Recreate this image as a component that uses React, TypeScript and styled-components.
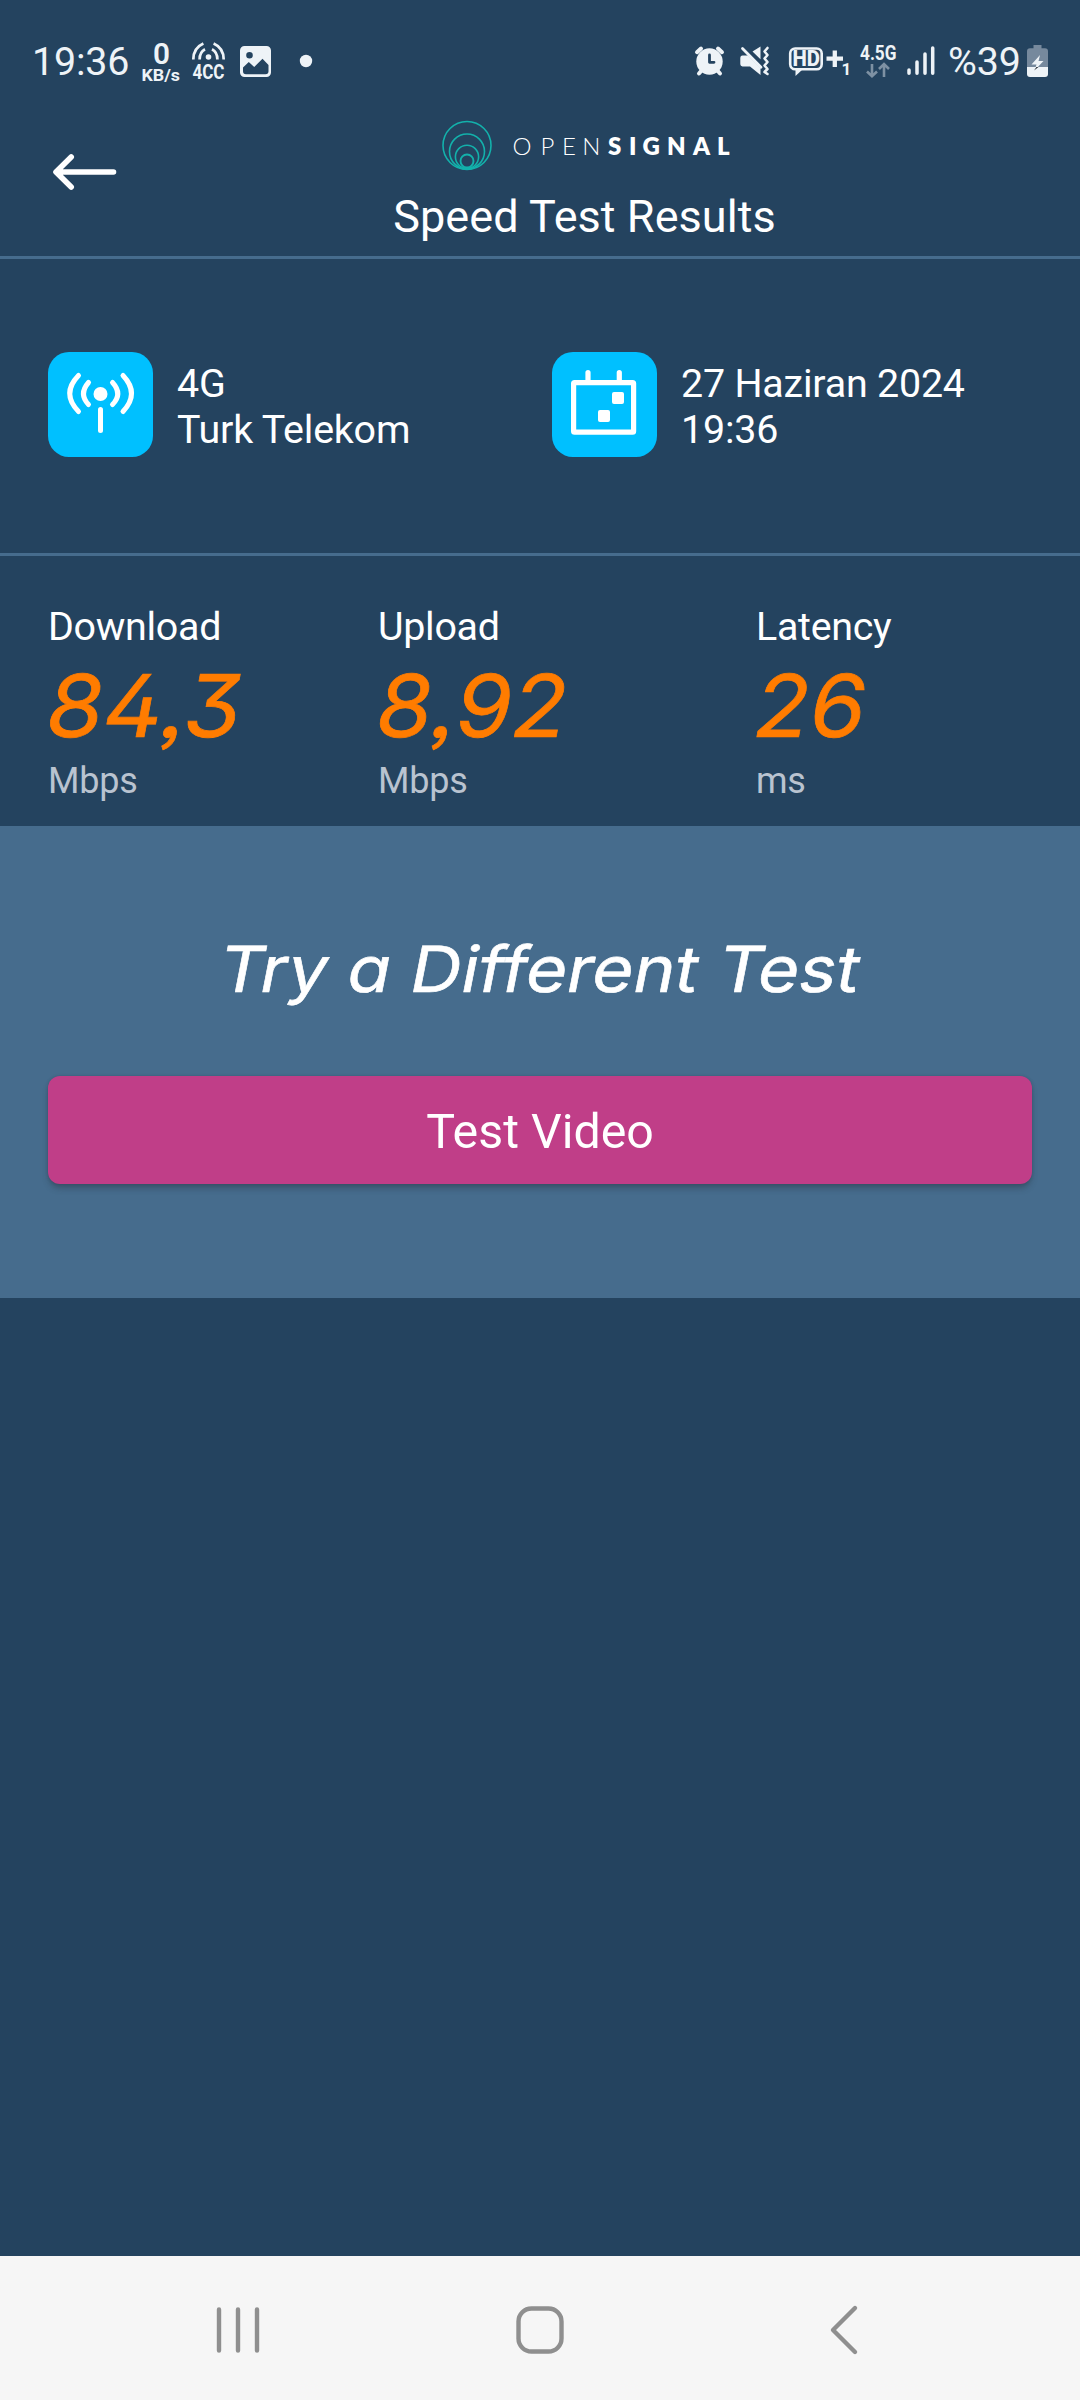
import React from "react";
import styled, { createGlobalStyle } from "styled-components";

const ink = "#eef3f7";
const navy = "#24435f";
const steel = "#466c8d";

const GlobalStyle = createGlobalStyle`
  *, *::before, *::after { box-sizing: border-box; }
  body { margin: 0; background: ${navy}; }
`;

const Screen = styled.div`
  display: flex;
  flex-direction: column;
  width: 1080px;
  height: 2400px;
  overflow: hidden;
  background: ${navy};
  color: #fff;
  font-family: Roboto, "Noto Sans", sans-serif;
`;

const StatusBar = styled.div`
  display: flex;
  justify-content: space-between;
  height: 110px;
  padding: 38px 31px 0 32px;
  color: ${ink};
`;

const StatusGroup = styled.div`
  display: flex;
  height: 44px;
`;

const StatusText = styled.span<{ $width: number }>`
  width: ${(p) => p.$width}px;
  font-size: 39.4px;
  line-height: 47px;
  letter-spacing: -0.2px;
  white-space: nowrap;
`;

const StatusGlyph = styled.svg<{ $gap: number }>`
  display: block;
  flex: none;
  margin-left: ${(p) => p.$gap}px;
  font-family: Roboto, sans-serif;
  overflow: visible;
`;

const Header = styled.header`
  display: grid;
  grid-template-columns: 168px 832px 80px;
  height: 149px;
  border-bottom: 3px solid ${steel};
`;

const BackButton = styled.button`
  display: flex;
  padding: 43px 0 0 52px;
  border: 0;
  background: none;
`;

const Heading = styled.div`
  display: flex;
  flex-direction: column;
  align-items: center;
  padding-top: 9px;
`;

const Title = styled.h1`
  margin: 19px 0 0;
  padding-left: 1px;
  font-size: 45px;
  line-height: 53px;
  font-weight: 400;
  letter-spacing: 0.06px;
`;

const InfoRow = styled.section`
  display: grid;
  grid-template-columns: 504px 1fr;
  height: 297px;
  padding: 93px 48px 0;
  border-bottom: 3px solid ${steel};
`;

const InfoItem = styled.div`
  display: flex;
  gap: 24px;
`;

const Tile = styled.div`
  display: flex;
  flex: none;
  width: 105px;
  height: 105px;
  border-radius: 21px;
  background: #00c0ff;
`;

const InfoText = styled.div`
  padding-top: 9px;
  font-size: 39.4px;
  line-height: 46px;
  letter-spacing: -0.2px;
  white-space: nowrap;
`;

const Results = styled.section`
  display: grid;
  grid-template-columns: 330px 378px 1fr;
  height: 270px;
  padding: 48px 0 0 48px;
`;

const Metric = styled.div`
  display: flex;
  flex-direction: column;
  align-items: flex-start;
`;

const MetricLabel = styled.div`
  font-size: 39.4px;
  line-height: 46px;
  letter-spacing: -0.28px;
`;

const MetricValue = styled.div<{ $stretch: number }>`
  height: 110px;
  color: #ff7c00;
  font-family: Inter, sans-serif;
  font-size: 86.5px;
  line-height: 111px;
  font-weight: 400;
  font-feature-settings: "cv02", "cv09", "ss03";
  -webkit-text-stroke: 0.7px #ff7c00;
  transform: scaleX(${(p) => p.$stretch}) skewX(-10deg);
  transform-origin: left center;
`;

const MetricUnit = styled.div`
  color: #b9c3d0;
  font-size: 36px;
  line-height: 42px;
  letter-spacing: -0.2px;
`;

const Promo = styled.section`
  display: flex;
  flex-direction: column;
  align-items: center;
  height: 472px;
  padding: 96px 48px 0;
  background: ${steel};
`;

const PromoTitle = styled.h2`
  margin: 0;
  font-family: Inter, sans-serif;
  font-size: 63.5px;
  line-height: 94px;
  font-weight: 400;
  font-feature-settings: "cv11";
  -webkit-text-stroke: 0.6px #fff;
  white-space: nowrap;
  transform: scaleX(1.11) skewX(-10deg);
`;

const PrimaryButton = styled.button`
  width: 984px;
  height: 108px;
  margin-top: 60px;
  padding: 3px 0 0;
  border: 0;
  border-radius: 12px;
  background: #c03e88;
  box-shadow: 0 5px 6px -1px rgba(40, 50, 60, 0.42), 0 0 3px rgba(40, 50, 60, 0.25);
  color: #fff;
  font: 400 48.3px/56px Roboto, sans-serif;
`;

const NavBar = styled.nav`
  display: grid;
  grid-template-columns: 476px 128px 476px;
  align-items: center;
  height: 144px;
  margin-top: auto;
  padding-top: 4px;
  background: #f6f6f6;
`;

const NavIcon = styled.svg<{ $shift?: number }>`
  display: block;
  justify-self: center;
  margin-left: ${(p) => p.$shift ?? 0}px;
  fill: none;
  stroke: #8f8f8f;
  stroke-width: 4.4;
  stroke-linecap: round;
  stroke-linejoin: round;
`;

type GlyphProps = { x: number; w: number; gap: number; children: React.ReactNode };

// Status glyphs share the bar's own coordinate system, 44px tall.
const Glyph = ({ x, w, gap, children }: GlyphProps) => (
  <StatusGlyph $gap={gap} width={w} height={44} viewBox={`${x} 38 ${w} 44`} fill={ink}>
    {children}
  </StatusGlyph>
);

const metrics = [
  { label: "Download", value: "84,3", unit: "Mbps", stretch: 1.065 },
  { label: "Upload", value: "8,92", unit: "Mbps", stretch: 1.045 },
  { label: "Latency", value: "26", unit: "ms", stretch: 1.045 },
];

export default function App() {
  return (
    <Screen>
      <GlobalStyle />
      <StatusBar>
        <StatusGroup>
          <StatusText $width={98}>19:36</StatusText>
          <Glyph x={140} w={42} gap={10}>
            <text x="153" y="64" fontSize="29.5" fontWeight="600" textLength="17" lengthAdjust="spacingAndGlyphs">0</text>
            <text x="141.5" y="80.5" fontSize="16.5" fontWeight="700" textLength="38.5" lengthAdjust="spacingAndGlyphs">KB/s</text>
          </Glyph>
          <Glyph x={190} w={37} gap={8}>
            <g fill="none" stroke={ink} strokeWidth="2.7">
              <path d="M193.3 59.5C193.3 51.5 197 46.2 203.4 43.4M223.7 59.5C223.7 51.5 220 46.2 213.6 43.4" />
              <path d="M199.6 59.5C199.6 54.5 201.4 51.2 205 49.3M217.4 59.5C217.4 54.5 215.6 51.2 212 49.3" />
            </g>
            <circle cx="208.5" cy="57" r="2.8" />
            <text x="192.5" y="79" fontSize="20.5" fontWeight="700" textLength="32" lengthAdjust="spacingAndGlyphs">4CC</text>
          </Glyph>
          <Glyph x={239} w={33} gap={12}>
            <path fillRule="evenodd" d="M244.5 46h22a4.5 4.5 0 0 1 4.5 4.5v22a4.5 4.5 0 0 1-4.5 4.5h-22a4.5 4.5 0 0 1-4.5-4.5v-22a4.5 4.5 0 0 1 4.5-4.5zM249.5 52a3.3 3.3 0 1 0 0 6.6a3.3 3.3 0 0 0 0-6.6zM243 67.5v3.7a3 3 0 0 0 3 3h19.5a3 3 0 0 0 3-3v-6.2l-6-6.2l-8.3 8.3l-5.4-5z" />
          </Glyph>
          <Glyph x={299} w={14} gap={27}>
            <circle cx="306" cy="61" r="6.2" />
          </Glyph>
        </StatusGroup>
        <StatusGroup>
          <Glyph x={694} w={32} gap={0}>
            <circle cx="709.5" cy="61.5" r="13.2" />
            <g fill="none" stroke={ink} strokeWidth="4" strokeLinecap="round">
              <path d="M697 52.2L701 48.5M722 52.2L718 48.5" />
              <path d="M702 70L699 73.5M717 70L720 73.5" />
            </g>
            <path d="M709.5 55V62.3H714" fill="none" stroke={navy} strokeWidth="2.8" strokeLinecap="round" strokeLinejoin="round" />
          </Glyph>
          <Glyph x={739} w={32} gap={13}>
            <path d="M742.5 55.5H748L760.5 68V75L750 66.5H742.5A2.3 2.3 0 0 1 740.3 64.3V57.7A2.3 2.3 0 0 1 742.5 55.5ZM752.5 51.5L760.5 46.5V59.2Z" />
            <path d="M742.5 48.5L761 67.2" stroke={ink} strokeWidth="2.8" strokeLinecap="round" />
            <path d="M767.5 48L764.5 51.5L767.5 55L764.5 58.5L767.5 62L764.5 65.5L767.5 69L764.5 72L767.5 74" fill="none" stroke={ink} strokeWidth="2.6" strokeLinecap="round" strokeLinejoin="round" />
          </Glyph>
          <Glyph x={788} w={62} gap={17}>
            <rect x="790.2" y="48.5" width="31.5" height="20.8" rx="5" fill="none" stroke={ink} strokeWidth="2.6" />
            <path d="M795.5 69.5V76L802.5 69.5Z" />
            <text x="792.5" y="66.3" fontSize="21.5" fontWeight="800" textLength="27.5" lengthAdjust="spacingAndGlyphs">HD</text>
            <path d="M834.8 50.5V67M826.5 58.7H843" stroke={ink} strokeWidth="4.3" />
            <text x="841.5" y="75" fontSize="17" fontWeight="700">1</text>
          </Glyph>
          <Glyph x={859} w={38} gap={9}>
            <text x="860" y="60" fontSize="20" fontWeight="700" textLength="36.5" lengthAdjust="spacingAndGlyphs">4.5G</text>
            <path d="M872 64V76M867 71.5L872 76.3L877 71.5M884 77V64.5M879 69L884 64L889 69" fill="none" stroke="#7e91a3" strokeWidth="2.6" />
          </Glyph>
          <Glyph x={906} w={29} gap={9}>
            <path d="M909 70V73.3M917 62V73.3M925 54V73.3M932.7 48V73.3" stroke={ink} strokeWidth="3.5" strokeLinecap="round" />
          </Glyph>
          <Glyph x={946} w={75} gap={11}>
            <text x="948" y="75" fontSize="39.4" textLength="73" lengthAdjust="spacing">%39</text>
          </Glyph>
          <Glyph x={1026} w={23} gap={5}>
            <path d="M1033.5 45H1041.5V48.3H1045A3 3 0 0 1 1048 51.3V67H1027V51.3A3 3 0 0 1 1030 48.3H1033.5Z" fill="#76899d" />
            <path d="M1027 67H1048V74A3 3 0 0 1 1045 77H1030A3 3 0 0 1 1027 74Z" />
            <path d="M1040 55L1031.5 64.5H1036.5L1034.5 70.5L1043.5 61H1038.5Z" />
            <path d="M1034 70.5L1036.5 67H1038.5Z" fill="#20272e" />
          </Glyph>
        </StatusGroup>
      </StatusBar>

      <Header>
        <BackButton aria-label="Back">
          <svg width="66" height="38" viewBox="52 153 66 38" fill="none" stroke="#fff" strokeWidth="5.6" strokeLinecap="round" strokeLinejoin="round">
            <path d="M113.5 172H57.5M71.2 157L56 172L71.2 187" />
          </svg>
        </BackButton>
        <Heading>
          <svg width="290" height="52" viewBox="439 119 290 52" overflow="visible">
            <g fill="none" stroke="#13b1ab" strokeWidth="1.6">
              <circle cx="467" cy="145.5" r="24" />
              <circle cx="467" cy="151.5" r="17.5" />
              <circle cx="467" cy="156.8" r="11.6" />
              <circle cx="467" cy="161" r="6.5" strokeWidth="1.9" />
            </g>
            <path d="M457 166Q467 171 477 166Q474 169.8 467 169.8T457 166Z" fill="#13b1ab" />
            <text y="155" x="512.5 540.5 562 582.2" fontFamily="Lato, sans-serif" fontWeight="300" fontSize="24" fill="#fff">OPEN</text>
            <text y="155" x="608 629 642.5 667 693 717" fontFamily="Lato, sans-serif" fontWeight="800" fontSize="24" fill="#fff">SIGNAL</text>
          </svg>
          <Title>Speed Test Results</Title>
        </Heading>
      </Header>

      <InfoRow>
        <InfoItem>
          <Tile>
            <svg width="105" height="105" viewBox="0 0 105 105" fill="none" stroke="#fff" strokeWidth="5" strokeLinecap="round">
              <circle cx="52.5" cy="42" r="7" fill="#fff" stroke="none" />
              <path d="M52.5 57.5V78.5" />
              <path d="M40.5 30.5Q30.5 42 40.5 52.5M64.5 30.5Q75 42 64.5 52.5" />
              <path d="M30.5 23.5Q13 41.5 30.5 59.5M75 23.5Q92 41.5 75 59.5" />
            </svg>
          </Tile>
          <InfoText>
            <div>4G</div>
            <div>Turk Telekom</div>
          </InfoText>
        </InfoItem>
        <InfoItem>
          <Tile>
            <svg width="105" height="105" viewBox="0 0 105 105" fill="none" stroke="#fff" strokeWidth="5.2">
              <rect x="21.6" y="30.6" width="60" height="49.6" rx="1" strokeLinejoin="round" />
              <path d="M36 20.5V29M67.3 20.5V29" strokeLinecap="round" />
              <rect x="60" y="40" width="12" height="12" rx="2" fill="#fff" stroke="none" />
              <rect x="46" y="58" width="12" height="12" rx="2" fill="#fff" stroke="none" />
            </svg>
          </Tile>
          <InfoText>
            <div>27 Haziran 2024</div>
            <div>19:36</div>
          </InfoText>
        </InfoItem>
      </InfoRow>

      <Results>
        {metrics.map((m) => (
          <Metric key={m.label}>
            <MetricLabel>{m.label}</MetricLabel>
            <MetricValue $stretch={m.stretch}>{m.value}</MetricValue>
            <MetricUnit>{m.unit}</MetricUnit>
          </Metric>
        ))}
      </Results>

      <Promo>
        <PromoTitle>Try a Different Test</PromoTitle>
        <PrimaryButton>Test Video</PrimaryButton>
      </Promo>

      <NavBar>
        <NavIcon width="46" height="50" viewBox="0 0 46 50">
          <path d="M4 4.5V45.5M23 4.5V45.5M42 4.5V45.5" />
        </NavIcon>
        <NavIcon width="50" height="50" viewBox="0 0 50 50">
          <rect x="3.5" y="3.5" width="43" height="43" rx="13" />
        </NavIcon>
        <NavIcon $shift={3} width="30" height="52" viewBox="0 0 30 52">
          <path d="M26 4L4 26L26 48" />
        </NavIcon>
      </NavBar>
    </Screen>
  );
}
